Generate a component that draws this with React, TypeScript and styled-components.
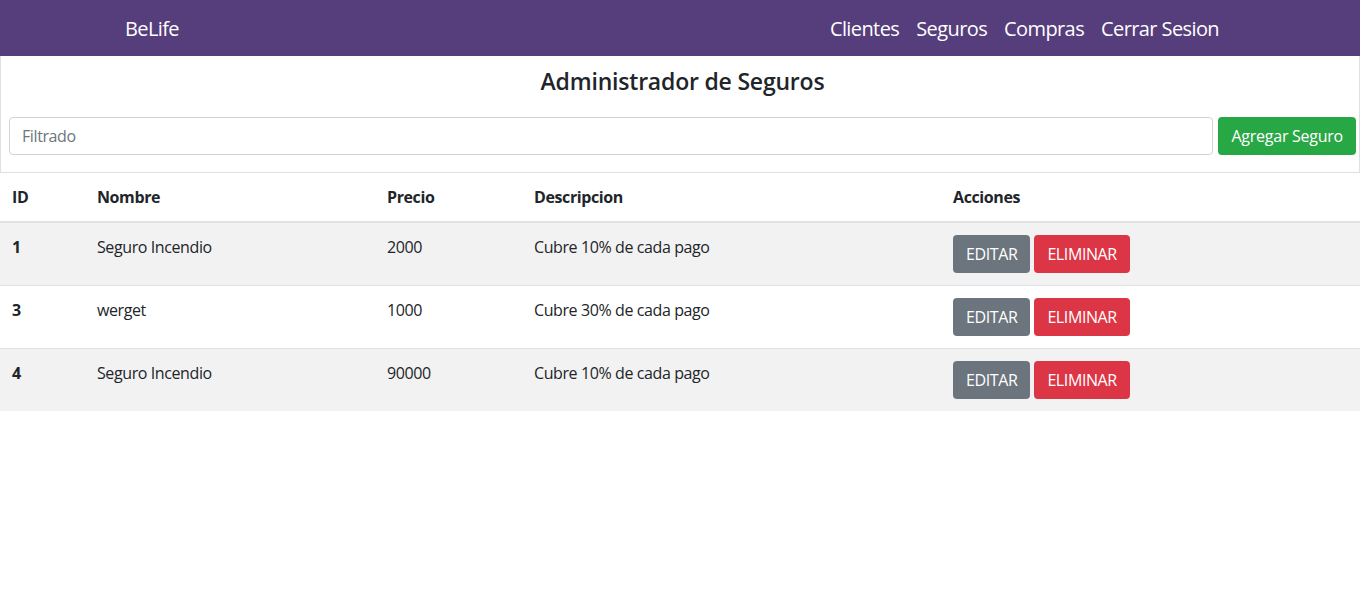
import React from "react";
import styled, { createGlobalStyle } from "styled-components";

const Global = createGlobalStyle`
  html, body { margin: 0; padding: 0; background: #fff; }
  body {
    font-family: "Open Sans", "Noto Sans", sans-serif;
    font-size: 16px;
    line-height: 1.5;
    color: #212529;
    letter-spacing: -0.4px;
  }
  * { box-sizing: border-box; }
`;

const NavBar = styled.nav`
  height: 56px;
  background: #563d7c;
  display: flex;
  align-items: center;
  padding-top: 2px;
`;

const NavInner = styled.div`
  width: 1140px;
  margin: 0 auto;
  padding: 0 15px;
  display: flex;
  align-items: center;
  justify-content: space-between;
`;

const Brand = styled.a`
  color: #fff;
  font-size: 20px;
  letter-spacing: -0.6px;
  text-decoration: none;
`;

const NavLinks = styled.div`
  display: flex;
  gap: 17px;
  margin-right: 16px;
`;

const NavLink = styled.a`
  color: #fff;
  font-size: 20px;
  letter-spacing: -0.6px;
  text-decoration: none;
`;

const Card = styled.section`
  border: 1px solid rgba(0, 0, 0, 0.125);
  border-top: none;
  padding: 8px 3px 17px 8px;
`;

const Title = styled.h4`
  margin: 0 0 21px;
  text-align: center;
  font-size: 23px;
  font-weight: 600;
  letter-spacing: -0.2px;
  line-height: 1.2;
  padding-top: 4px;
`;

const FilterRow = styled.div`
  display: flex;
  gap: 5px;
`;

const Input = styled.input`
  flex: 1;
  height: 38px;
  padding: 6px 12px;
  font: inherit;
  font-size: 16px;
  letter-spacing: inherit;
  color: #495057;
  border: 1px solid #ced4da;
  border-radius: 4px;
  &::placeholder { color: #6c757d; }
`;

const Button = styled.button<{ $variant: "success" | "secondary" | "danger" }>`
  height: 38px;
  padding: 6px 12px;
  font: inherit;
  font-size: 16px;
  letter-spacing: ${(p) => (p.$variant === "success" ? "-0.25px" : "inherit")};
  border: 1px solid transparent;
  border-radius: 4px;
  color: #fff;
  white-space: nowrap;
  background: ${(p) =>
    p.$variant === "success" ? "#28a745" : p.$variant === "danger" ? "#dc3545" : "#6c757d"};
`;

const Table = styled.table`
  width: 100%;
  border-collapse: collapse;
`;

const Th = styled.th<{ $w?: number }>`
  text-align: left;
  font-weight: 700;
  padding: 12px;
  border-bottom: 2px solid #dee2e6;
  width: ${(p) => (p.$w ? `${p.$w}px` : "auto")};
`;

const Tr = styled.tr<{ $striped: boolean }>`
  background: ${(p) => (p.$striped ? "rgba(0,0,0,0.05)" : "transparent")};
`;

const Td = styled.td<{ $bold?: boolean }>`
  padding: 12px;
  vertical-align: top;
  border-top: 1px solid #dee2e6;
  font-weight: ${(p) => (p.$bold ? 700 : 400)};
`;

const Actions = styled.div`
  display: flex;
  gap: 4px;
`;

const rows = [
  { id: 1, nombre: "Seguro Incendio", precio: 2000, desc: "Cubre 10% de cada pago" },
  { id: 3, nombre: "werget", precio: 1000, desc: "Cubre 30% de cada pago" },
  { id: 4, nombre: "Seguro Incendio", precio: 90000, desc: "Cubre 10% de cada pago" },
];

export default function App() {
  return (
    <>
      <Global />
      <NavBar>
        <NavInner>
          <Brand>BeLife</Brand>
          <NavLinks>
            <NavLink>Clientes</NavLink>
            <NavLink>Seguros</NavLink>
            <NavLink>Compras</NavLink>
            <NavLink>Cerrar Sesion</NavLink>
          </NavLinks>
        </NavInner>
      </NavBar>
      <Card>
        <Title>Administrador de Seguros</Title>
        <FilterRow>
          <Input placeholder="Filtrado" />
          <Button $variant="success">Agregar Seguro</Button>
        </FilterRow>
      </Card>
      <Table>
        <thead>
          <tr>
            <Th $w={85}>ID</Th>
            <Th $w={290}>Nombre</Th>
            <Th $w={147}>Precio</Th>
            <Th $w={419}>Descripcion</Th>
            <Th>Acciones</Th>
          </tr>
        </thead>
        <tbody>
          {rows.map((r, i) => (
            <Tr key={r.id} $striped={i % 2 === 0}>
              <Td $bold>{r.id}</Td>
              <Td>{r.nombre}</Td>
              <Td>{r.precio}</Td>
              <Td>{r.desc}</Td>
              <Td>
                <Actions>
                  <Button $variant="secondary">EDITAR</Button>
                  <Button $variant="danger">ELIMINAR</Button>
                </Actions>
              </Td>
            </Tr>
          ))}
        </tbody>
      </Table>
    </>
  );
}
